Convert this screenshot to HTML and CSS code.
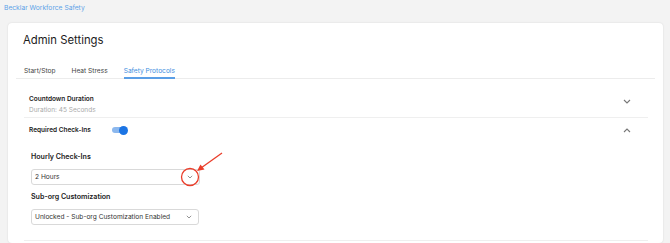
FILE: index.html
```html
<!DOCTYPE html>
<html>
<head>
<meta charset="utf-8">
<link rel="stylesheet" href="styles.css">
</head>
<body>
<div class="brand">Becklar Workforce Safety</div>
<div class="card">
  <h1 class="title">Admin Settings</h1>
  <div class="tabs">
    <div class="tab">Start/Stop</div>
    <div class="tab">Heat Stress</div>
    <div class="tab active">Safety Protocols</div>
  </div>
  <div class="panel">
    <div class="item">
      <div class="item-head first">
        <div class="item-text">
          <div class="item-title">Countdown Duration</div>
          <div class="item-sub">Duration: 45 Seconds</div>
        </div>
        <svg class="chev down" width="8" height="5" viewBox="0 0 8 5"><path d="M1 1 L4 4 L7 1" fill="none" stroke="#777" stroke-width="1.1"/></svg>
      </div>
    </div>
    <div class="item open">
      <div class="item-head">
        <div class="row">
          <div class="item-title">Required Check-Ins</div>
          <div class="toggle"><span class="knob"></span></div>
        </div>
        <svg class="chev" width="8" height="5" viewBox="0 0 8 5"><path d="M1 4 L4 1 L7 4" fill="none" stroke="#777" stroke-width="1.1"/></svg>
      </div>
      <div class="fields">
        <div class="field-label">Hourly Check-Ins</div>
        <div class="select s1"><span>2 Hours</span>
          <svg width="6" height="4" viewBox="0 0 6 4"><path d="M0.8 0.8 L3 3 L5.2 0.8" fill="none" stroke="#888" stroke-width="0.9"/></svg>
        </div>
        <div class="field-label">Sub-org Customization</div>
        <div class="select s2"><span>Unlocked - Sub-org Customization Enabled</span>
          <svg width="6" height="4" viewBox="0 0 6 4"><path d="M0.8 0.8 L3 3 L5.2 0.8" fill="none" stroke="#888" stroke-width="0.9"/></svg>
        </div>
      </div>
    </div>
  </div>
</div>
<svg class="annot" width="670" height="243" viewBox="0 0 670 243">
  <circle cx="190" cy="177" r="8.5" fill="none" stroke="#ea3d2a" stroke-width="1.3"/>
  <path d="M222 153 L201 168" stroke="#ea3d2a" stroke-width="1.3" fill="none"/>
  <path d="M197 171 L204.5 169.5 L200.5 164.5 Z" fill="#ea3d2a"/>
</svg>
</body>
</html>
```
FILE: styles.css
```css
* { box-sizing: border-box; }
html, body { margin: 0; padding: 0; }
body {
  width: 670px;
  height: 243px;
  overflow: hidden;
  background: #f3f3f3;
  font-family: Inter, "Noto Sans", sans-serif;
  color: #222;
  position: relative;
}
.brand {
  color: #5ea3e8;
  font-size: 6.7px;
  padding: 4px 0 0 4px;
  height: 23px;
  line-height: 9px;
}
.card {
  margin: 0 7px 0 8px;
  background: #fff;
  border-radius: 4px;
  box-shadow: 0 0 2px rgba(0,0,0,0.12);
  padding: 0 8px;
  height: 220px;
}
.title {
  margin: 0;
  padding: 10px 0 0 7px;
  font-size: 11.3px;
  font-weight: 400;
  line-height: 15px;
  height: 39px;
  color: #1c1c1c;
}
.tabs {
  display: flex;
  gap: 16px;
  padding-left: 8px;
  border-bottom: 1px solid #ececec;
  height: 17px;
}
.tab {
  font-size: 6.6px;
  color: #444;
  line-height: 9px;
  padding-top: 4.5px;
  height: 16px;
}
.tab.active {
  color: #3f8fe0;
  border-bottom: 2px solid #5a9ee6;
  height: 17px;
}
.panel { padding: 0 7px 0 8px; }
.item { border-bottom: 1px solid #efefef; }
.item-head {
  display: flex;
  justify-content: space-between;
  align-items: center;
  padding: 0 17px 0 5px;
  height: 24px;
}
.item-head.first {
  height: 38px;
  align-items: flex-start;
  padding-top: 16px;
}
.chev.down { margin-top: 4px; }
.item-title {
  font-size: 6.5px;
  font-weight: 600;
  line-height: 9px;
  color: #222;
}
.item-sub {
  font-size: 6.5px;
  color: #aaa;
  line-height: 9px;
  margin-top: 2px;
}
.row { display: flex; align-items: center; gap: 21px; }
.toggle {
  position: relative;
  width: 15px;
  height: 6px;
  border-radius: 3px;
  background: #8cb8ee;
}
.knob {
  position: absolute;
  right: -1px;
  top: -1.5px;
  width: 9px;
  height: 9px;
  border-radius: 50%;
  background: #1b74e4;
}
.fields { padding: 0 0 15px 7px; }
.field-label {
  font-size: 7.1px;
  font-weight: 600;
  line-height: 10px;
  color: #222;
  margin: 7px 0 7px;
}
.fields .field-label:first-child { margin-top: 10px; }
.select {
  display: flex;
  justify-content: space-between;
  align-items: center;
  height: 16px;
  border: 1px solid #d9d9d9;
  border-radius: 3px;
  font-size: 6.6px;
  color: #333;
  padding: 0 6px 0 3px;
}
.s1 { width: 169px; }
.s2 { width: 168px; }
.annot { position: absolute; left: 0; top: 0; pointer-events: none; }
```
